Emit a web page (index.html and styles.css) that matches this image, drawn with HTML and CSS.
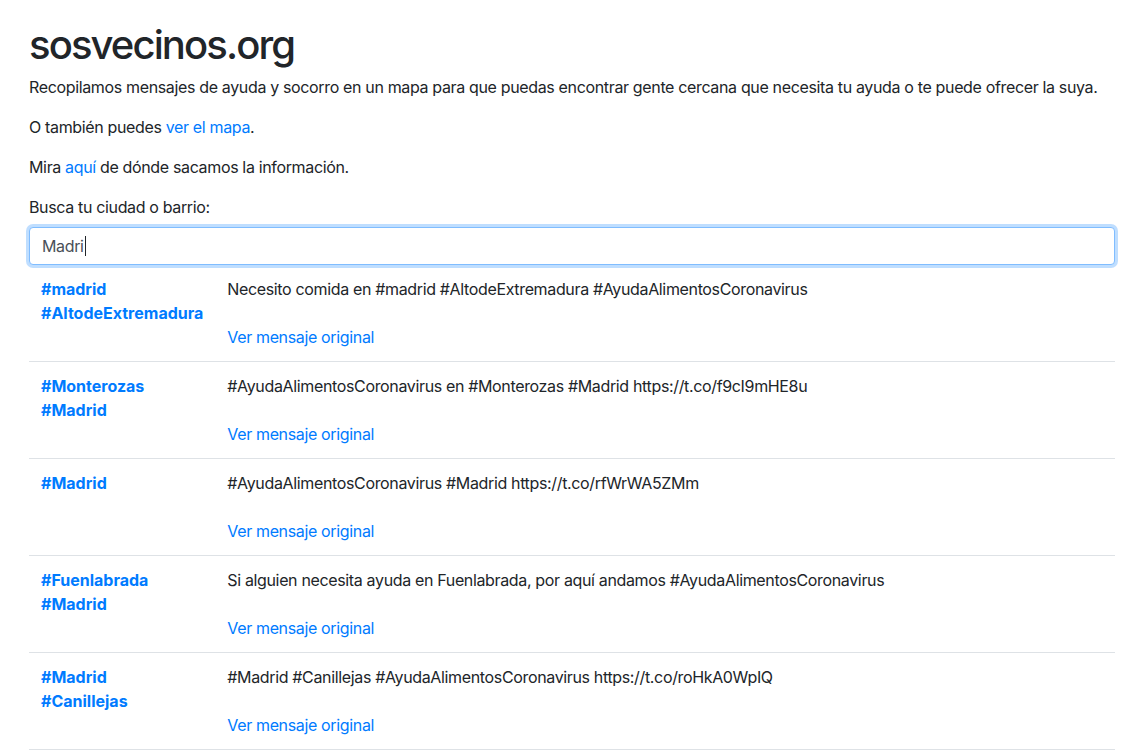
FILE: index.html
```html
<!DOCTYPE html>
<html lang="es">
<head>
<meta charset="utf-8">
<title>sosvecinos.org</title>
<link rel="stylesheet" href="styles.css">
</head>
<body>
<div class="container">
  <h1 class="title">sosvecinos.org</h1>
  <p>Recopilamos mensajes de ayuda y socorro en un mapa para que puedas encontrar gente cercana que necesita tu ayuda o te puede ofrecer la suya.</p>
  <p>O también puedes <a href="#">ver el mapa</a>.</p>
  <p>Mira <a href="#">aquí</a> de dónde sacamos la información.</p>
  <label class="label" for="q">Busca tu ciudad o barrio:</label>
  <div class="input"><span class="value">Madri</span><span class="caret"></span></div>
  <table class="results">
    <tbody>
      <tr class="first">
        <td class="tags"><a href="#">#madrid</a><br><a href="#">#AltodeExtremadura</a></td>
        <td class="msg"><div>Necesito comida en #madrid #AltodeExtremadura #AyudaAlimentosCoronavirus</div><a class="orig" href="#">Ver mensaje original</a></td>
      </tr>
      <tr>
        <td class="tags"><a href="#">#Monterozas</a><br><a href="#">#Madrid</a></td>
        <td class="msg"><div>#AyudaAlimentosCoronavirus en #Monterozas #Madrid https://t.co/f9cI9mHE8u</div><a class="orig" href="#">Ver mensaje original</a></td>
      </tr>
      <tr>
        <td class="tags"><a href="#">#Madrid</a></td>
        <td class="msg"><div>#AyudaAlimentosCoronavirus #Madrid https://t.co/rfWrWA5ZMm</div><a class="orig" href="#">Ver mensaje original</a></td>
      </tr>
      <tr>
        <td class="tags"><a href="#">#Fuenlabrada</a><br><a href="#">#Madrid</a></td>
        <td class="msg"><div>Si alguien necesita ayuda en Fuenlabrada, por aquí andamos #AyudaAlimentosCoronavirus</div><a class="orig" href="#">Ver mensaje original</a></td>
      </tr>
      <tr>
        <td class="tags"><a href="#">#Madrid</a><br><a href="#">#Canillejas</a></td>
        <td class="msg"><div>#Madrid #Canillejas #AyudaAlimentosCoronavirus https://t.co/roHkA0WpIQ</div><a class="orig" href="#">Ver mensaje original</a></td>
      </tr>
    </tbody>
  </table>
</div>
</body>
</html>
```
FILE: styles.css
```css
* { box-sizing: border-box; }
html, body { margin: 0; padding: 0; background: #fff; }
body {
  font-family: Inter, "Noto Sans", "Liberation Sans", sans-serif;
  font-size: 16px;
  line-height: 1.5;
  letter-spacing: -0.35px;
  color: #212529;
}
a { color: #007bff; text-decoration: none; }
.container { padding: 21px 27px 0 29px; }
.title {
  font-size: 40px;
  font-weight: 500;
  line-height: 1.2;
  letter-spacing: -1.9px;
  margin: 0 0 6px 0;
}
p { margin: 0 0 16px 0; }
.label { display: block; margin-bottom: 8px; }
.input {
  position: relative;
  z-index: 1;
  display: flex;
  align-items: center;
  height: 38px;
  padding: 6px 12px;
  border: 1px solid #80bdff;
  border-radius: 4px;
  box-shadow: 0 0 0 3px rgba(0, 123, 255, 0.25);
  color: #495057;
  background: #fff;
}
.caret { display: inline-block; width: 1px; height: 20px; background: #212529; margin-left: 1px; }
.results { width: 100%; border-collapse: collapse; }
.results td {
  padding: 12px;
  vertical-align: top;
  border-bottom: 1px solid #dee2e6;
}
.results td.tags { width: 186px; font-weight: 700; letter-spacing: 0; }
.orig { display: inline-block; margin-top: 24px; }
```
